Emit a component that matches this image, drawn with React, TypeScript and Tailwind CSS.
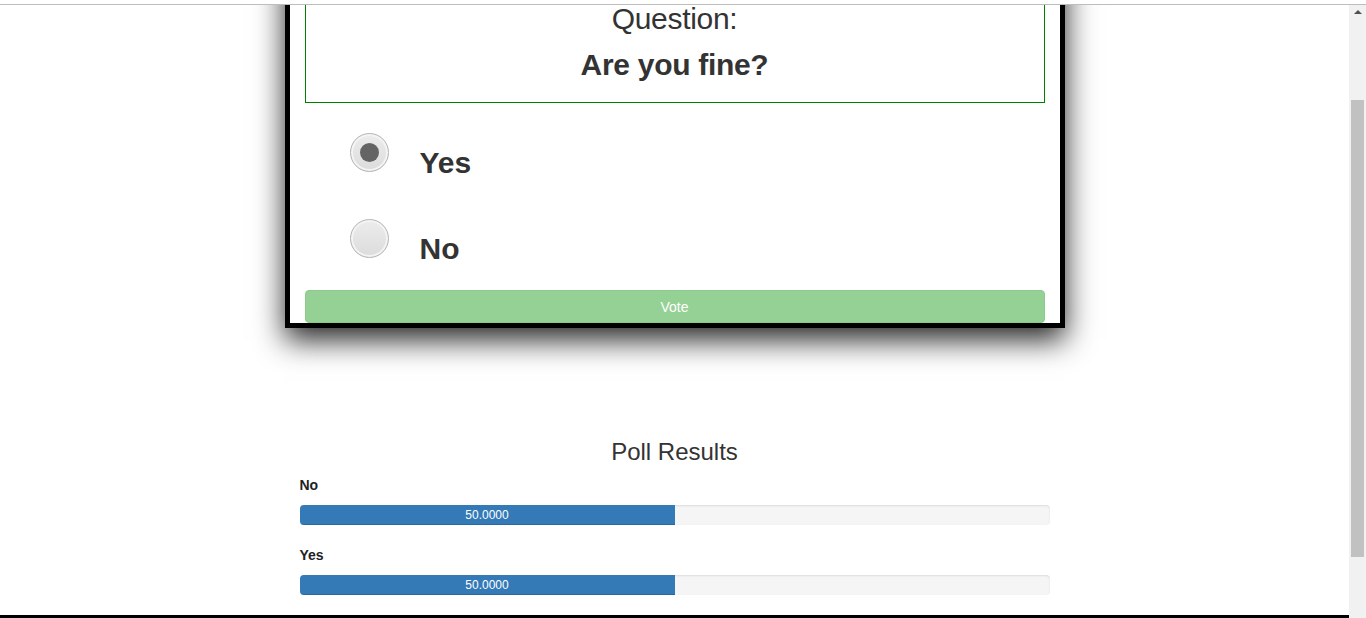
import React from "react";

function Radio({ checked }: { checked: boolean }) {
  return (
    <div className="w-[39px] h-[39px] rounded-full border border-[#b5b5b5] bg-[linear-gradient(#ececec,#dcdcdc)] shadow-[inset_0_0_0_2px_#f4f4f4] flex items-center justify-center shrink-0">
      {checked && <div className="w-[19px] h-[19px] rounded-full bg-[#646464]" />}
    </div>
  );
}

function Bar({ label, value }: { label: string; value: number }) {
  return (
    <div>
      <div className="text-[14px] leading-[20px] font-bold text-[#222]">{label}</div>
      <div className="mt-[10px] h-[20px] rounded-[4px] bg-[#f5f5f5] shadow-[inset_0_1px_2px_rgba(0,0,0,0.1)] overflow-hidden flex">
        <div
          className="h-full bg-[#337ab7] text-white text-[12px] leading-[20px] text-center shadow-[inset_0_-1px_0_rgba(0,0,0,0.15)]"
          style={{ width: `${value}%` }}
        >
          {value.toFixed(4)}
        </div>
      </div>
    </div>
  );
}

export default function App() {
  return (
    <div
      className="w-[1366px] h-[618px] overflow-hidden flex flex-col bg-white text-[#333]"
      style={{ fontFamily: '"Liberation Sans", Arial, sans-serif' }}
    >
      <div className="h-[5px] shrink-0 bg-white border-b border-[#bdbdbd]" />
      <div className="flex flex-1 min-h-0">
        <div className="w-[1349px] overflow-hidden flex flex-col">
          <div className="mx-auto mt-[-45px] w-[780px] border-[5px] border-black bg-white shadow-[0_12px_28px_rgba(0,0,0,0.85)] shrink-0">
            <div className="px-[15px] pt-[15px]">
              <div className="border border-[#008000] pt-[22px] pb-[22px] text-center">
                <div className="text-[30px] leading-[31px] tracking-[-0.3px]">Question:</div>
                <div className="mt-[15px] text-[30px] leading-[31px] font-bold tracking-[-0.3px]">Are you fine?</div>
              </div>
              <div className="pt-[30px] pl-[45px]">
                <div className="flex items-start">
                  <Radio checked />
                  <div className="ml-[31px] mt-[12px] text-[30px] leading-[36px] font-bold">Yes</div>
                </div>
                <div className="flex items-start mt-[38px]">
                  <Radio checked={false} />
                  <div className="ml-[31px] mt-[12px] text-[30px] leading-[36px] font-bold">No</div>
                </div>
              </div>
              <button className="mt-[23px] w-full h-[33px] rounded-[4px] bg-[#95d195] border border-[#8cc98c] text-white text-[14px] leading-[32px] text-center block">
                Vote
              </button>
            </div>
          </div>
          <div className="mx-auto w-[750px] shrink-0">
            <div className="mt-[110px] text-center text-[24px] leading-[27px]">Poll Results</div>
            <div className="mt-[10px]">
              <Bar label="No" value={50} />
            </div>
            <div className="mt-[20px]">
              <Bar label="Yes" value={50} />
            </div>
          </div>
          <div className="mt-[20px] h-[10px] bg-black shrink-0" />
        </div>
        <div className="w-[17px] bg-[#f1f1f1] relative flex flex-col items-center">
          <div className="mt-[5px] w-0 h-0 border-l-[4px] border-r-[4px] border-b-[4px] border-l-transparent border-r-transparent border-b-[#505050]" />
          <div className="mt-[86px] w-[13px] h-[457px] bg-[#c1c1c1]" />
        </div>
      </div>
    </div>
  );
}
